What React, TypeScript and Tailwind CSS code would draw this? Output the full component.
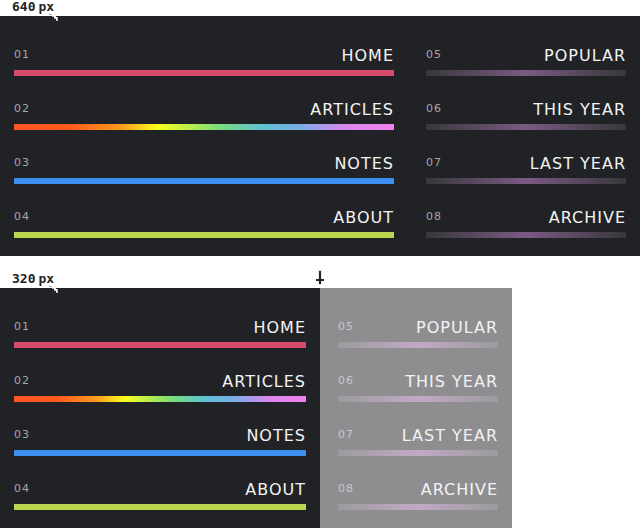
const main = [
  { n: '01', label: 'HOME', bar: 'bg-[#d64a6a]' },
  {
    n: '02',
    label: 'ARTICLES',
    bar: 'bg-[linear-gradient(90deg,#ff5521_0%,#ff5a1f_15%,#ff9a1c_28%,#f8ff1e_38%,#7adc7a_54%,#5ec2d0_65%,#78aee8_75%,#d888ee_87%,#f080f0_100%)]',
  },
  { n: '03', label: 'NOTES', bar: 'bg-[#3d8ff2]' },
  { n: '04', label: 'ABOUT', bar: 'bg-[#b8d64c]' },
]

const more = ['POPULAR', 'THIS YEAR', 'LAST YEAR', 'ARCHIVE'].map((label, i) => ({
  n: '0' + (i + 5),
  label,
}))

function Item({ n, label, bar, num }: { n: string; label: string; bar: string; num: string }) {
  return (
    <div className="flex flex-col">
      <div className="flex h-[21px] items-start justify-between">
        <span className={`mt-[4px] text-[11px] leading-[12px] tracking-[1px] ${num}`}>{n}</span>
        <span className="mt-[1px] text-[16px] leading-5 tracking-[1px] text-[#f3f3f3]">{label}</span>
      </div>
      <div className={`mt-[4px] h-[6px] ${bar}`} />
    </div>
  )
}

function MainList() {
  return (
    <div className="flex flex-col gap-[23px]">
      {main.map(m => (
        <Item key={m.n} n={m.n} label={m.label} bar={m.bar} num="text-[#a6a7a9]" />
      ))}
    </div>
  )
}

function MoreList({ light }: { light?: boolean }) {
  return (
    <div className="flex flex-col gap-[23px]">
      {more.map(m => (
        <Item
          key={m.n}
          n={m.n}
          label={m.label}
          num={light ? 'text-[#c8c8ca]' : 'text-[#a6a7a9]'}
          bar={
            light
              ? 'bg-[linear-gradient(90deg,#9b9b9d,#c3a9c7_50%,#9b9b9d)]'
              : 'bg-[linear-gradient(90deg,#37383b,#7b5a83_50%,#37383b)]'
          }
        />
      ))}
    </div>
  )
}

function Header({ size, arrow }: { size: string; arrow?: boolean }) {
  return (
    <div className="relative z-10 h-4 bg-white pl-3 font-['DejaVu_Sans_Mono',monospace] text-[13px] font-bold leading-[14px] text-[#222]">
      {size}
      <span className="ml-[3px]">px</span>
      <svg className="absolute left-[49px] top-[13px]" width="9" height="8" viewBox="0 0 9 8">
        <path d="M0 0h5v2h2v2h2v4h-2v-2h-2v-2h-2v-2h-3z" fill="#bdbdbd" />
        <path d="M1 0h4v2h2v2h1v3h-1v-2h-2v-2h-2v-2h-2z" fill="#fff" />
      </svg>
      {arrow && (
        <svg className="absolute left-[315px] top-[-2px]" width="10" height="16" viewBox="0 0 10 16">
          <rect x="3.5" y="0" width="3" height="15" fill="#d8d8d8" />
          <rect x="4" y="1" width="2" height="13" fill="#222" />
          <rect x="1" y="9" width="8" height="2" fill="#222" />
        </svg>
      )}
    </div>
  )
}

export default function App() {
  return (
    <div className="min-h-screen bg-white font-['DejaVu_Sans',sans-serif]">
      <Header size="640" />
      <div className="flex h-[240px] gap-8 bg-[#212226] px-[14px] pt-[29px]">
        <div className="flex-1">
          <MainList />
        </div>
        <div className="w-[200px]">
          <MoreList />
        </div>
      </div>

      <div className="h-4" />
      <Header size="320" arrow />
      <div className="flex h-[240px]">
        <div className="w-[320px] bg-[#212226] px-[14px] pt-[29px]">
          <MainList />
        </div>
        <div className="w-[192px] bg-[#8e8e90] pl-[18px] pr-[14px] pt-[29px]">
          <MoreList light />
        </div>
      </div>
    </div>
  )
}
